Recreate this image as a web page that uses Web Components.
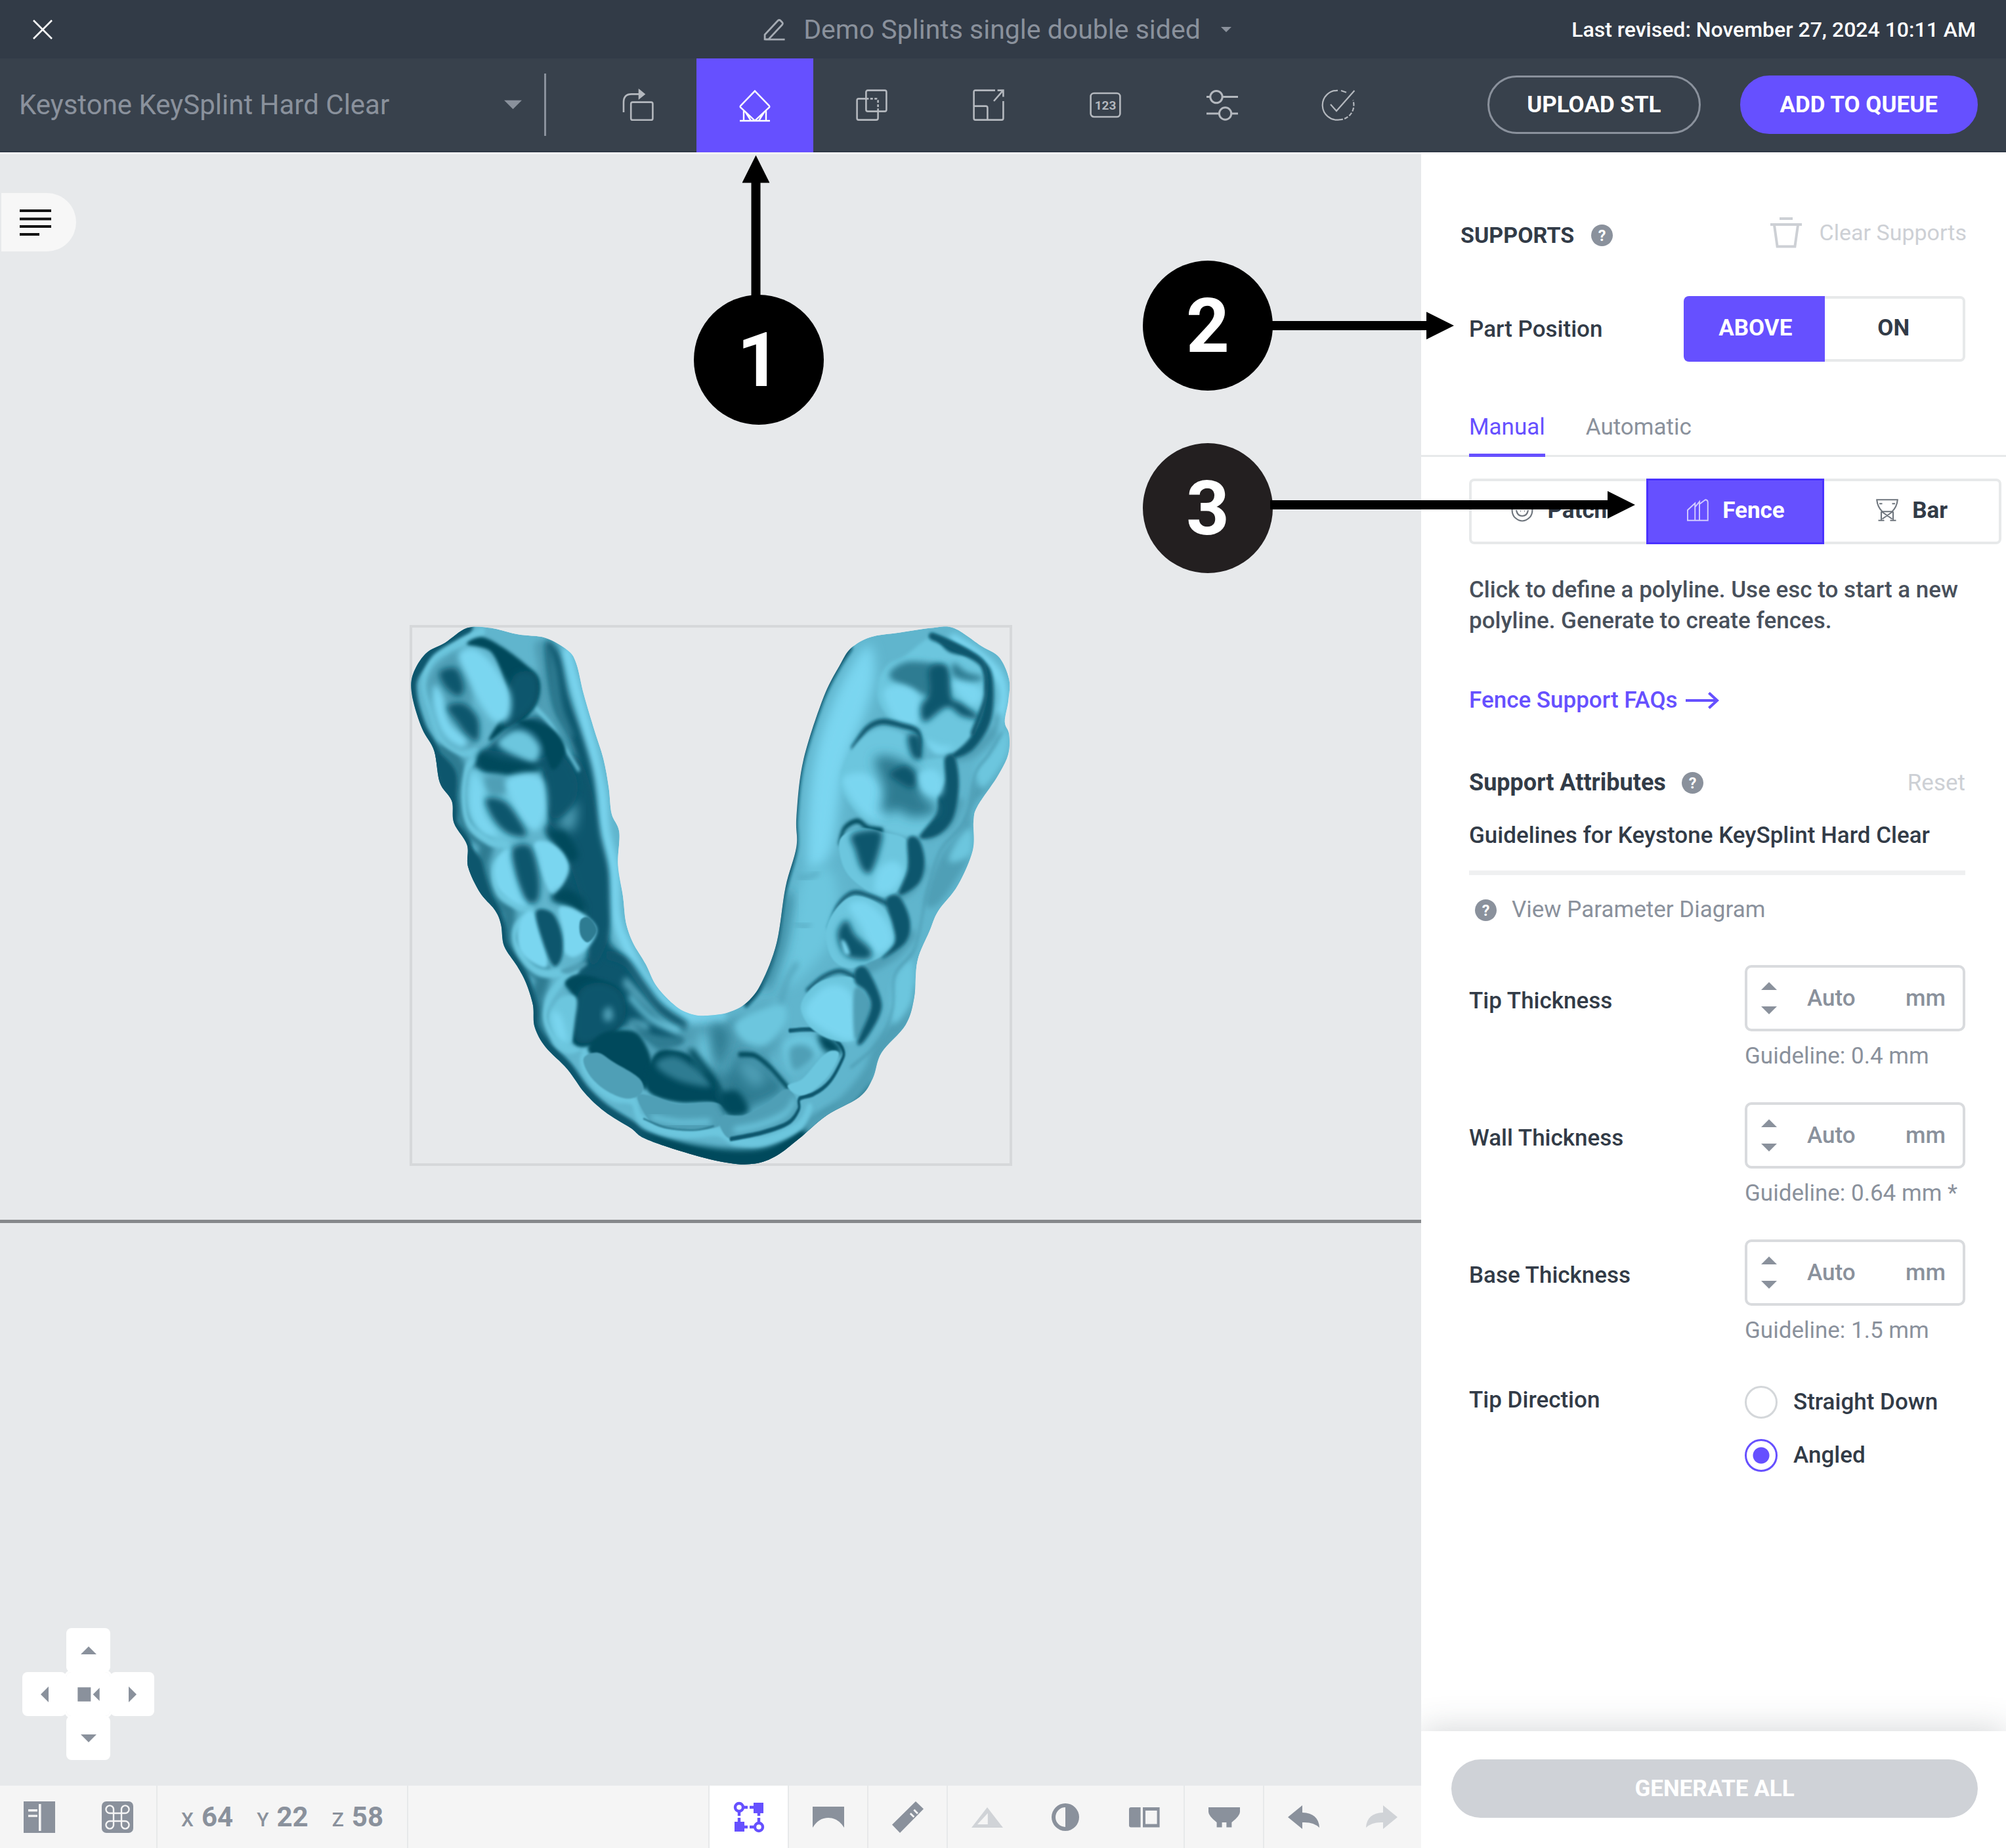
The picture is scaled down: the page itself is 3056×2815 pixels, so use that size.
<!DOCTYPE html>
<html lang="en">
<head>
<meta charset="UTF-8">
<meta name="viewport" content="width=device-width, initial-scale=1">
<title>Demo Splints single double sided</title>
<style>
  :root {
    --accent: #6650ff;
    --ink: #323b47;
    --grey: #8a919c;
    --faint: #cdd0d5;
    --line: #e7e9ea;
    --text: 35px;
  }
  * { box-sizing: border-box; }
  body {
    margin: 0;
    font-family: Roboto, "Liberation Sans", sans-serif;
    font-size: var(--text);
    color: var(--ink);
  }
</style>
</head>
<body>
<print-prep></print-prep>

<script>
const RESET = `
  :host, *, *::before, *::after { box-sizing: border-box; }
  button, input, select { font: inherit; color: inherit; margin: 0; padding: 0; border: 0; background: none; border-radius: 0; }
  button { display: flex; align-items: center; justify-content: center; cursor: pointer; }
`;

/* Icon artwork, all on a 24 unit grid. "line" icons are stroked, the rest filled. */
const ICONS = {
  close: { line: 1.3, art: `<path d="M5 5l14 14M19 5L5 19"/>` },
  pencil: { line: 2, art: `<path d="M1.500 22.500v-5L15.500 2.500q1.500-1.500 3 0l1.500 1.500q1.500 1.500 0 3L5.500 22.500zM2 22.700h21"/>` },
  caret: { art: `<path d="M0 6h24L12 18z"/>` },
  caretUp: { art: `<path d="M0 18h24L12 6z"/>` },
  caretLeft: { art: `<path d="M18 0v24L6 12z"/>` },
  caretRight: { art: `<path d="M6 0v24L18 12z"/>` },
  orient: { line: 1.3, art: `<path d="M1 17.500V10Q1 3.700 7 3.700h8.500"/><path d="M13 .8l3.600 2.900L13 6.600z" fill="currentColor"/><rect x="6.600" y="9.800" width="16.600" height="13.600" rx="1.300"/>` },
  supports: { line: 1.2, art: `<path d="M12 .8l11 11.400q.4.500 0 1L12 23.400 1 13.200q-.4-.5 0-1zM.5 23.500h23M3.500 16v7.500M20.500 16v7.500M5 17l4 6.400M19 17l-4 6.400"/>` },
  duplicate: { line: 1.3, art: `<rect x="7.700" y=".8" width="15.500" height="16" rx="1.300"/><path d="M7.700 7.200H2q-1.200 0-1.200 1.200V22q0 1.300 1.200 1.300h13.400q1.400 0 1.400-1.300v-5.200"/><path d="M7.700 7.200h7.800q1.300 0 1.300 1.300v8.300" stroke-dasharray="2 1.200"/>` },
  scale: { line: 1.3, art: `<path d="M17 .8H2Q.8.8.8 2v20q0 1.300 1.200 1.300h20q1.200 0 1.200-1.300V9M.8 12.800h9q1.400 0 1.400 1.300v9.200M16 9l6.500-7.500M18.800.8h4.400v5"/>` },
  numbers: { line: 1.3, art: `<rect x=".8" y="3" width="22.400" height="18" rx="2.500"/><text x="12" y="15.400" text-anchor="middle" font-size="9.500" font-weight="700" fill="currentColor" stroke="none">123</text>` },
  sliders: { line: 1.5, art: `<path d="M0 5.800h2.800M12 5.800h12M0 18.500h9.500M19 18.500h5"/><circle cx="7.500" cy="5.800" r="4.600"/><circle cx="14.300" cy="18.500" r="4.600"/>` },
  check: { line: 1.1, art: `<path d="M11 .9A11.200 11.200 0 1 0 12 23.200"/><path d="M12 23.200A11.200 11.200 0 0 0 22.600 8.300" stroke-dasharray="3 1.200"/><path d="M13.500 1l4 1.400M5.500 11.500l4.500 5L23.700 1"/>` },
  menu: { line: 2, art: `<path d="M0 3h24M0 9.200h24M0 15h24M0 21h15"/>` },
  help: { art: `<circle cx="12" cy="12" r="12"/><text x="12" y="18" text-anchor="middle" font-size="17" font-weight="700" fill="#fff">?</text>` },
  trash: { line: 2, art: `<path d="M0 6h24M3 6.500l2.300 16.300h13.400L21 6.500M7 1.500h10"/>` },
  patch: { line: 1.4, art: `<path d="M3.500 6C1 9 1 16 4.500 19.500q7.500 7 15 0C23 16 23 9 20.500 6q-8.500-7-17 0zM6 12q1 6 6 6t6-6" /><path d="M8 8h.6M12 9h.6M16 8h.6M10 13h.6M14 13h.6"/>` },
  fence: { line: 1.3, art: `<path d="M2 22.500V12L9.500 5v17.500zM9.500 22.500V9L14 3.500v19zM14 22.500V6l6-4.500q2.500 0 2.500 3v18z"/>` },
  bar: { line: 1.4, art: `<path d="M1.500 1.500h21q-.5 7-5.500 12H7Q2 8.500 1.500 1.500zM4 5.500h3M17 5.500h3M6 13.500v9M18 13.500v9M3 22.500h6M15 22.500h6M7 14l10 7M17 14L7 21"/>` },
  arrow: { line: 2, art: `<path d="M0 12h23M17 6.500l6 5.500-6 5.500"/>` },
  camera: { art: `<path d="M2 5.500h12v13H2zM22 6v12l-6-6z"/>` },
  sidebar: { art: `<path fill-rule="evenodd" d="M0 0h24v24H0zM11.500 2v20.500h1.800V2zM3.500 6v1.700h7V6zM3.500 10.200v1.700h7v-1.700z"/>` },
  command: { art: `<rect width="24" height="24" rx="3.500"/><path fill="none" stroke="#f5f5f5" stroke-width="1.200" d="M9 9V5.800A2.900 2.900 0 1 0 6.200 9h11.600A2.900 2.900 0 1 0 15 5.800v12.400A2.900 2.900 0 1 0 17.800 15H6.200A2.900 2.900 0 1 0 9 18.200z"/>` },
  bounds: { line: 2.2, art: `<circle cx="4.500" cy="4.500" r="3"/><circle cx="19.500" cy="19.500" r="3"/><path fill="currentColor" stroke="none" d="M15.500 1H23v8h-7.500zM1 15.500h7.500V23H1z"/><path d="M4.500 8v8M19.500 8v8M8 4.500h8M8 19.500h8" stroke-dasharray="3 1.500"/>` },
  arch: { art: `<path d="M0 4h24v16Q19.500 12.500 12 12.500T0 20z"/>` },
  ruler: { art: `<path fill-rule="evenodd" d="M18 0l6 5.800L6 24 0 17.800zM13.400 9.600l2.800 2.800 1-1-2.800-2.800zM16.200 6.900l2.800 2.800 1-1-2.800-2.800z"/>` },
  mirror: { art: `<path fill-rule="evenodd" d="M12 4.500L24 20H0zM12.400 9L4.500 17.500h7.900z"/>` },
  contrast: { art: `<path fill-rule="evenodd" d="M12 1.500a10.500 10.500 0 1 1 0 21a10.500 10.500 0 1 1 0-21zM12 4.500a7.500 7.500 0 0 0 0 15z"/>` },
  split: { art: `<path fill-rule="evenodd" d="M2 4.500h7.300v15.300H2q-1.500 0-1.500-1.500V6Q.5 4.500 2 4.500zM11 4.500h12.800v15.300H11zM13 7v10.300h8.800V7z"/>` },
  section: { art: `<path d="M0 4.500h24V8q0 3-6.300 8v3.800h-4V16h-3.400v3.800h-4V16Q0 11 0 8z"/>` },
  undo: { art: `<path d="M11 3v5.500Q23.500 9 24 20q-4.500-4.500-13-4v5L0 12z"/>` },
  redo: { art: `<path d="M13 3v5.500Q.5 9 0 20q4.500-4.500 13-4v5L24 12z"/>` }
};

/**
 * @module AppIcon
 * @description Inline icon. Size comes from --size, colour from currentColor.
 */
class AppIcon extends HTMLElement {
  connectedCallback() {
    const icon = ICONS[this.getAttribute("name")];
    const paint = icon.line
      ? `fill="none" stroke="currentColor" stroke-width="${icon.line}"`
      : `fill="currentColor"`;
    this.attachShadow({ mode: "open" }).innerHTML = `
      <style>
        :host { display: block; flex: none; width: var(--size, 48px); height: var(--size, 48px); }
        svg { display: block; width: 100%; height: 100%; overflow: visible; }
      </style>
      <svg viewBox="0 0 24 24" ${paint} aria-hidden="true">${icon.art}</svg>
    `;
  }
}
customElements.define("app-icon", AppIcon);

/**
 * @module TitleBar
 * @description Dark strip with close button, project name and revision date.
 */
class TitleBar extends HTMLElement {
  connectedCallback() {
    this.attachShadow({ mode: "open" }).innerHTML = `
      <style>
        ${RESET}
        :host { display: grid; grid-template-columns: 1fr auto 1fr; align-items: center; height: 89px; padding: 0 46px 0 41px; background: var(--ink); }
        .close { justify-self: start; color: #fff; }
        .name { gap: 15px; color: var(--grey); font-size: 41px; }
        .name app-icon { --size: 16px; margin: 0 12px 0 16px; }
        .name .edit { --size: 34px; margin: 0 12px 0 0; color: #a5abb3; }
        .revised { justify-self: end; color: #fff; font-size: 32px; font-weight: 500; }
      </style>
      <button class="close" aria-label="Close"><app-icon name="close"></app-icon></button>
      <button class="name"><app-icon class="edit" name="pencil"></app-icon><slot></slot><app-icon name="caret"></app-icon></button>
      <div class="revised"><slot name="revised"></slot></div>
    `;
  }
}
customElements.define("title-bar", TitleBar);

/**
 * @module ToolBar
 * @description Material picker, step tools and the two main actions.
 */
class ToolBar extends HTMLElement {
  connectedCallback() {
    const tools = ["orient", "supports", "duplicate", "scale", "numbers", "sliders", "check"];
    this.attachShadow({ mode: "open" }).innerHTML = `
      <style>
        ${RESET}
        :host { display: flex; align-items: center; height: 143px; padding-right: 43px; background: #38414c; border-bottom: 2px solid #2f3845; }
        .material { display: flex; align-items: center; width: 832px; height: 95px; padding: 0 34px 0 29px; border-right: 3px solid var(--grey); color: var(--grey); }
        select { flex: 1; appearance: none; outline: none; font-size: 42px; }
        .material app-icon { --size: 27px; }
        nav { display: flex; align-self: stretch; margin-left: 51px; color: #b4b8be; }
        nav button { width: 178px; }
        nav .on { background: var(--accent); color: #fff; margin-bottom: -2px; }
        .actions { display: flex; gap: 60px; margin-left: auto; }
        .actions button { height: 89px; padding: 0 57px; border: 3px solid var(--grey); border-radius: 45px; color: #fff; font-weight: 700; white-space: nowrap; }
        .actions .main { padding: 0 58px; background: var(--accent); border-color: var(--accent); }
      </style>
      <div class="material">
        <select aria-label="Material"><option>Keystone KeySplint Hard Clear</option></select>
        <app-icon name="caret"></app-icon>
      </div>
      <nav>
        ${tools.map((name) => `<button class="${name === "supports" ? "on" : ""}" aria-label="${name}"><app-icon name="${name}"></app-icon></button>`).join("")}
      </nav>
      <div class="actions">
        <button>UPLOAD STL</button>
        <button class="main">ADD TO QUEUE</button>
      </div>
    `;
  }
}
customElements.define("tool-bar", ToolBar);

/**
 * Smooth path through a list of points.
 * @param {string} list - "x,y x,y ..." pairs.
 * @param {boolean} closed - Join the last point to the first.
 * @returns {string} Path data.
 */
function smooth(list, closed) {
  const p = list.trim().split(/\s+/).map((s) => s.split(",").map(Number));
  const n = p.length;
  const at = (i) => (closed ? p[(i + n) % n] : p[Math.max(0, Math.min(n - 1, i))]);
  let d = `M${p[0]}`;
  for (let i = 0; i < (closed ? n : n - 1); i++) {
    const [a, b, c, e] = [at(i - 1), at(i), at(i + 1), at(i + 2)];
    const c1 = [b[0] + (c[0] - a[0]) / 6, b[1] + (c[1] - a[1]) / 6].map(Math.round);
    const c2 = [c[0] - (e[0] - b[0]) / 6, c[1] - (e[1] - b[1]) / 6].map(Math.round);
    d += `C${c1} ${c2} ${c}`;
  }
  return d + (closed ? "Z" : "");
}

const OUTLINE = `80,175 140,115 230,85 330,45 440,45 560,62 690,72 790,105 830,140 865,225 915,325 955,400 980,480
  993,550 1028,600 1022,690 1045,775 1058,845 1090,900 1150,960 1200,1020 1290,1075 1370,1097 1440,1099 1530,1090
  1610,1065 1680,1010 1750,900 1790,750 1840,640 1840,560 1870,410 1960,240 2040,145 2090,100 2180,70 2310,58
  2460,45 2560,45 2690,95 2770,125 2815,185 2812,240 2795,300 2815,335 2810,390 2760,450 2670,530 2652,570
  2648,650 2580,745 2490,815 2450,870 2395,950 2380,1050 2340,1125 2230,1200 2190,1270 2130,1320 1980,1370
  1850,1435 1750,1480 1650,1502 1530,1500 1350,1475 1150,1435 1080,1405 960,1360 870,1310 790,1245 690,1185
  640,1130 632,1070 600,1010 560,965 500,910 485,850 455,810 390,765 335,695 330,635 270,575 260,515 205,465
  180,380 125,320 80,235`;

const LIGHT = "#7ad6f0", SOFT = "#6cc6de", MID = "#4f9fb6", DIM = "#2f7b92", DARK = "#0f566d", DEEP = "#034a5c";

/* Shading of the scan, painted in order: [colour, softness, points, stroke width?] */
const SHADES = [
  // outer wall of the left arm and the front
  [DIM, 2, "190,390 250,395 300,440 290,500 330,580 420,625 400,690 440,770 520,810 520,880 590,950 680,985 650,1060 700,1150", 60],
  [DARK, 1, "330,40 200,90 90,160 75,230 120,325 175,385 200,470 255,520 265,585 325,640 330,700 385,770 450,815 480,860 495,915 560,975 600,1020 628,1080 635,1135 690,1190 790,1250 870,1315 960,1365 1080,1410 1150,1440 1350,1482 1530,1508 1650,1510 1760,1485 1860,1440", 54],
  [DARK, 1, "185,385 250,410 285,450 268,520 210,470"], [DARK, 1, "335,640 390,670 415,720 455,808 380,770 330,700"],
  [DEEP, 2, "1080,1400 1150,1420 1350,1448 1550,1462 1700,1456 1850,1415 1980,1360 2100,1325 2180,1270 2110,1350 1850,1450 1700,1520 1400,1510"],
  [MID, 2, "1900,1400 2050,1345 2170,1260 2220,1190 2330,1110 2370,1040", 50],
  // inner wall and floor of the left arm
  [MID, 2, "640,90 700,90 740,200 800,330 840,430 700,310 640,290 660,180"],
  [DARK, 2, "690,85 760,120 800,230 870,340 920,430 935,560 975,680 990,800 975,890 1100,970 1200,1060 1330,1130 1300,1180 1150,1160 1050,1130 900,1180 820,1170 830,1060 790,1010 860,960 930,870 860,800 720,780 800,690 690,600 720,560 700,500 700,420 390,430 390,395 560,300 700,300 840,425 790,330 730,250"],
  [DARK, 2, "680,420 840,400 930,560 980,720 980,880 900,960 860,800 760,620 700,560"],
  [DIM, 2, "700,95 740,150 770,260 820,340 780,320 720,240"],
  [LIGHT, 2, "790,115 820,190 880,320 925,420 950,500 965,600 1005,700 1015,830 1070,920 1160,1015 1260,1080 1380,1112 1500,1110", 40],
  [SOFT, 1, "640,260 720,310 780,370 840,430", 14],
  [MID, 3, "760,560 830,520 820,590 760,590"],
  // ridge that follows the crowns
  [SOFT, 1, "400,55 300,85 180,130 135,195 170,280 215,345 300,380 375,385 330,430 315,510 340,580 430,625 520,640 455,700 475,765 560,800 625,812 555,860 555,910 620,965 700,985 830,975", 24],
  [SOFT, 1, "790,985 710,1050 690,1110 740,1170 800,1190 885,1180 860,1225 910,1280 1000,1320 1090,1330 1120,1375 1200,1405 1330,1420 1480,1415 1560,1440 1700,1440 1850,1400 1900,1350", 26],
  // first molar, left
  [DEEP, 1, "330,90 400,70 500,100 600,145 660,185 655,240 600,290 530,310 430,350 520,250 500,190 440,110"],
  [DARK, 2, "540,180 640,170 650,240 580,290 500,310"],
  [MID, 2, "150,190 220,130 330,110 360,200 340,300 380,350 300,375 220,340 170,260"],
  [LIGHT, 2, "290,120 350,100 420,125 480,170 530,230 520,290 460,300 400,260 340,190"],
  [LIGHT, 2, "180,200 220,230 250,300 330,350 300,370 220,335 175,260"],
  [DARK, 2, "205,165 280,155 315,205 290,230 230,205"],
  [DARK, 2, "240,260 310,250 380,290 380,350 330,335 285,300"],
  // second molar, left
  [DARK, 2, "400,380 460,380 660,400 740,380 830,450 820,520 720,560 680,430 560,440 400,430"],
  [DEEP, 1, "560,300 640,300 740,330 780,380 720,430 660,340 600,315"],
  [SOFT, 2, "470,360 540,325 610,330 665,370 640,410 560,395"],
  [DEEP, 2, "385,385 480,400 680,425 560,445 400,430"],
  [SOFT, 2, "350,430 420,450 520,480 600,560 560,620 450,620 360,580 335,510"],
  [MID, 2, "410,450 500,450 520,490 440,500"],
  [LIGHT, 2, "510,460 600,440 680,460 695,540 650,595 580,570 530,510"],
  [LIGHT, 2, "355,440 400,480 410,550 470,605 400,600 345,540"],
  [DARK, 2, "415,510 500,515 575,570 600,610 520,605 450,565"],
  // premolars, left
  [DEEP, 2, "700,600 780,600 840,660 800,680 720,620"],
  [LIGHT, 1, "480,665 540,650 560,720 610,790 560,795 480,760 455,710"],
  [LIGHT, 1, "635,640 690,625 760,650 795,690 780,730 730,770 690,740"],
  [DARK, 2, "540,645 620,640 660,720 655,785 600,785 550,705"],
  [DEEP, 2, "720,780 790,755 870,790 870,830 790,800"],
  [LIGHT, 1, "570,850 620,815 660,850 700,960 640,960 570,920"],
  [LIGHT, 1, "750,810 800,805 880,830 925,865 890,910 820,940 770,920 770,870"],
  [DIM, 0, "850,840 890,833 925,868 885,900 850,880"],
  [DARK, 1, "645,820 720,820 765,880 765,940 730,965 690,920"],
  [MID, 1, "760,975 850,955 880,960 800,985"],
  // canine and incisors, left
  [DEEP, 1, "780,1010 850,990 940,1000 1030,1030 1055,1100 950,1170 820,1175 830,1060"],
  [DARK, 2, "840,1040 940,1010 1040,1040 1050,1110 960,1160 830,1165"],
  [SOFT, 1, "710,1090 760,1050 830,1050 825,1110 800,1180 740,1160 705,1120"],
  [LIGHT, 2, "720,1090 760,1100 790,1170 740,1150"],
  [MID, 2, "955,1090 985,1075 1000,1105 965,1115"],
  [MID, 2, "1060,1010 1200,1090 1330,1150 1480,1150 1580,1120 1650,1140 1700,1250 1560,1300 1400,1210 1250,1190 1180,1210 1080,1130 1150,1130", 30],
  [DARK, 2, "980,935 1060,955 1140,1020 1220,1080 1330,1125", 26],
  [SOFT, 2, "1080,1050 1180,1110 1300,1140", 18],
  [DIM, 2, "1080,1110 1180,1150 1320,1160 1280,1185 1190,1190"],
  [DEEP, 1, "890,1180 960,1145 1080,1140 1140,1170 1180,1240 1150,1300 1120,1280 1000,1240 900,1205"],
  [MID, 0, "865,1215 930,1200 1000,1225 1120,1270 1130,1310 1060,1325 960,1300 890,1260"],
  [DEEP, 1, "1150,1260 1200,1200 1290,1195 1380,1220 1500,1300 1540,1360 1450,1335 1300,1335 1170,1310"],
  [DIM, 2, "1200,1225 1280,1210 1370,1240 1450,1290 1320,1280 1220,1250"],
  [MID, 0, "1110,1320 1180,1318 1300,1340 1480,1338 1510,1380 1460,1405 1300,1408 1180,1392"],
  [SOFT, 2, "1180,1375 1300,1390 1440,1388", 14],
  [DIM, 0, "1140,1380 1250,1405 1380,1410 1460,1400", 5],
  // floor of the arch
  [MID, 3, "1330,1130 1480,1120 1600,1100 1700,1070 1760,1100 1740,1200 1640,1200 1500,1230 1400,1210"],
  [SOFT, 3, "1400,1150 1440,1160 1450,1250 1390,1220"],
  [DIM, 3, "1450,1130 1530,1150 1500,1240 1560,1290 1500,1280"],
  [SOFT, 2, "1560,1120 1680,1080 1780,1070 1790,1120 1700,1180 1600,1170"],
  [DEEP, 2, "1360,1200 1470,1280 1530,1340", 26],
  [DIM, 3, "1550,1220 1620,1205 1740,1260 1790,1300 1680,1340 1560,1360 1500,1300"],
  [MID, 3, "1570,1230 1640,1225 1700,1270 1640,1290"],
  [DEEP, 1, "1580,1205 1650,1208 1720,1240 1800,1295", 14],
  [DEEP, 2, "1490,1315 1570,1305 1620,1360 1530,1372"],
  [MID, 0, "1500,1372 1600,1370 1700,1340 1790,1300 1840,1325 1840,1365 1780,1395 1660,1420 1540,1435 1490,1400"],
  [SOFT, 2, "1560,1410 1680,1395 1790,1365 1830,1330", 16],
  [DARK, 0, "1540,1435 1680,1418 1800,1392 1850,1355 1855,1325 1920,1312 1990,1280 2045,1225 2055,1195 2010,1160 1930,1138 1810,1140", 12],
  [SOFT, 2, "1780,1180 1850,1150 1940,1160 1970,1190 1880,1240 1810,1250"],
  [MID, 2, "1810,1190 1880,1180 1920,1210 1830,1250"],
  [DEEP, 2, "1940,1150 2010,1165 2050,1200 1970,1195"],
  [SOFT, 0, "1800,1290 1870,1270 1950,1215 2000,1195 2035,1205 1990,1260 1910,1305 1850,1315"],
  // right arm: broad light wall with a dark inner edge
  [LIGHT, 3, "2170,90 2060,180 1960,320 1910,450 1890,600 1900,700 2000,650 2060,430 2160,270 2200,170"],
  [SOFT, 3, "1870,720 1990,700 2030,780 1990,900 1850,1000 1780,1010 1820,880"],
  [MID, 2, "1850,725 1900,722 1940,712", 8], [MID, 2, "1840,850 1880,858 1900,850", 8], [MID, 2, "1770,1060 1800,1000 1840,960", 16],
  [DARK, 1, "1610,1068 1680,1015 1748,905 1785,760 1835,645 1836,560 1866,410 1956,240 2036,145 2086,100", 20],
  [DIM, 3, "1700,1010 1765,900 1800,780", 34],
  // buccal side of the right arm
  [MID, 2, "2800,400 2720,480 2640,540 2640,650 2560,740 2480,800 2430,790 2490,680 2600,580 2660,460 2780,350"],
  [SOFT, 2, "2660,430 2740,370 2800,320 2810,390 2700,480"],
  [SOFT, 2, "2580,620 2640,590 2640,660 2540,680"],
  [SOFT, 2, "2290,1000 2370,950 2370,1060 2280,1120"],
  [MID, 1, "2780,330 2720,390 2660,440 2640,520 2600,580 2500,650 2440,760 2400,880 2370,930 2290,990 2280,1080 2220,1170 2090,1240", 9],
  [LIGHT, 2, "2560,80 2690,130 2770,180 2790,240 2760,310", 40],
  [MID, 2, "2540,395 2640,385 2740,330 2760,290", 30],
  [MID, 2, "2440,610 2540,580 2590,520", 30], [MID, 2, "2300,780 2380,750 2430,700", 24], [MID, 2, "2170,970 2290,930 2370,880", 34],
  // molars, right
  [DARK, 1, "2450,65 2560,85 2690,130 2740,180 2732,295 2650,375 2550,395 2660,310 2700,240 2690,170 2600,125 2540,150"],
  [SOFT, 1, "2215,190 2260,145 2340,120 2460,70 2540,110 2690,140 2700,240 2660,320 2580,375 2480,385 2420,345 2300,310 2220,250"],
  [DARK, 1, "2460,68 2530,85 2620,112 2690,142 2710,190 2700,250 2650,330", 20],
  [DIM, 2, "2270,180 2330,140 2450,140 2530,160 2540,240 2440,230"],
  [LIGHT, 2, "2240,220 2320,200 2400,230 2390,310 2300,300"],
  [DARK, 2, "2450,155 2530,150 2545,230 2600,250 2680,290 2600,285 2530,260 2430,300 2410,260 2450,220"],
  [LIGHT, 2, "2560,190 2630,190 2690,220 2660,255 2590,230"],
  [DIM, 2, "2560,140 2620,165 2700,180 2640,190 2560,175"],
  [LIGHT, 2, "2430,350 2500,365 2560,370 2490,388"],
  [DARK, 1, "2100,370 2160,320 2230,300 2320,310 2400,330 2400,390", 16],
  [SOFT, 1, "2040,450 2100,370 2220,320 2350,340 2400,400 2510,400 2540,440 2510,520 2470,580 2380,610 2280,600 2160,570 2070,510"],
  [DARK, 1, "2520,400 2565,395 2585,470 2560,560 2490,608 2405,614 2480,550 2490,500 2520,460"],
  [DARK, 2, "2350,340 2405,340 2410,400 2370,395"],
  [LIGHT, 2, "2050,460 2150,440 2230,480 2250,560 2150,550"],
  [DIM, 3, "2200,400 2300,400 2400,440 2420,500 2490,540 2380,560 2300,540 2230,550 2240,480"],
  [DARK, 2, "2270,440 2340,420 2390,450 2370,480 2300,460"],
  [LIGHT, 2, "2400,440 2470,430 2510,460 2500,500 2420,490"],
  // premolars, right
  [DEEP, 1, "2040,630 2060,590 2120,570 2170,590 2230,595", 14],
  [SOFT, 0, "2035,630 2080,600 2160,590 2230,600 2340,620 2350,690 2300,760 2220,775 2130,745 2060,700"],
  [DARK, 2, "2090,610 2160,595 2230,600 2220,650 2180,710 2140,700 2110,650"],
  [LIGHT, 2, "2220,700 2290,680 2330,710 2280,760 2200,760"],
  [DARK, 1, "2350,620 2400,620 2428,680 2400,740 2310,770 2350,700"],
  [DARK, 1, "1990,860 2030,800 2100,765 2180,775 2260,795", 12],
  [SOFT, 0, "1975,870 2020,810 2100,775 2200,790 2270,830 2300,890 2250,930 2150,960 2070,970 2000,940"],
  [LIGHT, 2, "2080,800 2160,790 2250,840 2280,900 2200,930 2140,860"],
  [DARK, 1, "2250,785 2310,775 2360,840 2340,900 2230,945 2290,900 2280,850"],
  [DARK, 2, "2030,870 2070,840 2110,880 2180,920 2170,945 2080,940 2040,910"],
  [LIGHT, 1, "2045,895 2065,900 2085,930 2060,930"],
  // canine, right
  [DARK, 1, "1890,1030 1960,995 2040,978 2110,995", 12],
  [SOFT, 0, "1860,1080 1900,1030 1980,1000 2110,1000 2180,1070 2150,1150 2040,1170 1920,1140"],
  [LIGHT, 2, "1880,1090 1980,1020 2090,1040 2110,1160 2000,1150"],
  [MID, 1, "2105,1030 2160,1040 2180,1090 2110,1165"],
  [DARK, 1, "2110,975 2160,970 2225,1050 2220,1100 2150,1170 2120,1170 2180,1080 2160,1035 2110,1010"]
];

/**
 * @module ScanModel
 * @description Top view of the splint scan inside its bounding box.
 */
class ScanModel extends HTMLElement {
  connectedCallback() {
    const shade = ([colour, soft, points, width]) =>
      width
        ? `<path d="${smooth(points, false)}" fill="none" stroke="${colour}" stroke-width="${width}" stroke-linecap="round" filter="url(#s${soft})"/>`
        : `<path d="${smooth(points, true)}" fill="${colour}" filter="url(#s${soft})"/>`;
    const outline = smooth(OUTLINE, true);
    this.attachShadow({ mode: "open" }).innerHTML = `
      <style>
        :host { display: block; box-sizing: border-box; width: 918px; height: 824px; border: 4px solid #d6d8da; }
        svg { display: block; width: 100%; height: 100%; overflow: visible; }
      </style>
      <svg viewBox="79 44 2738 1457" preserveAspectRatio="none" role="img" aria-label="Splint model">
        <defs>
          <clipPath id="arch"><path d="${outline}"/></clipPath>
          <filter id="s0" x="-20%" y="-20%" width="140%" height="140%"><feGaussianBlur stdDeviation="3 2"/></filter>
          <filter id="s1" x="-30%" y="-30%" width="160%" height="160%"><feGaussianBlur stdDeviation="8 5"/></filter>
          <filter id="s2" x="-40%" y="-40%" width="180%" height="180%"><feGaussianBlur stdDeviation="15 9"/></filter>
          <filter id="s3" x="-50%" y="-50%" width="200%" height="200%"><feGaussianBlur stdDeviation="26 15"/></filter>
        </defs>
        <g clip-path="url(#arch)">
          <path d="${outline}" fill="#60b5cd"/>
          ${SHADES.map(shade).join("")}
        </g>
      </svg>
    `;
  }
}
customElements.define("scan-model", ScanModel);

/**
 * @module ViewPad
 * @description Cross shaped camera control.
 */
class ViewPad extends HTMLElement {
  connectedCallback() {
    this.attachShadow({ mode: "open" }).innerHTML = `
      <style>
        ${RESET}
        :host { display: grid; grid-template: repeat(3, 67px) / repeat(3, 67px); color: var(--grey); }
        button { background: #fff; border-radius: 8px; }
        app-icon { --size: 24px; }
        .up { grid-area: 1 / 2; } .left { grid-area: 2 / 1; } .right { grid-area: 2 / 3; } .down { grid-area: 3 / 2; }
        .home { grid-area: 2 / 2; outline: 3px solid #fff; }
        .home app-icon { --size: 40px; }
      </style>
      <button class="up" aria-label="Top view"><app-icon name="caretUp"></app-icon></button>
      <button class="left" aria-label="Left view"><app-icon name="caretLeft"></app-icon></button>
      <button class="home" aria-label="Reset camera"><app-icon name="camera"></app-icon></button>
      <button class="right" aria-label="Right view"><app-icon name="caretRight"></app-icon></button>
      <button class="down" aria-label="Bottom view"><app-icon name="caret"></app-icon></button>
    `;
  }
}
customElements.define("view-pad", ViewPad);

/**
 * @module StatusBar
 * @description Bottom strip: panels, model size and view tools.
 */
class StatusBar extends HTMLElement {
  connectedCallback() {
    const tools = [
      ["bounds", "on ruled"], ["arch", "ruled"], ["ruler", "ruled"], ["mirror", "ruled off"], ["contrast", ""],
      ["split", ""], ["section", "ruled"], ["undo", "ruled"], ["redo", "off"]
    ];
    const size = { X: 64, Y: 22, Z: 58 };
    this.attachShadow({ mode: "open" }).innerHTML = `
      <style>
        ${RESET}
        :host { display: flex; height: 95px; background: #f5f5f5; color: var(--grey); }
        button { width: 119px; }
        .panels { display: flex; }
        .size { display: flex; align-items: center; gap: 36px; padding: 4px 36px; margin: 0; border: solid var(--line); border-width: 0 2px; }
        .size div { display: flex; align-items: baseline; gap: 12px; }
        dt { font-size: 30px; font-weight: 500; }
        dd { margin: 0; font-size: 42px; font-weight: 700; }
        .view { display: flex; margin-left: auto; }
        .view button { width: 120px; }
        .view .ruled { width: 121px; border-left: 2px solid var(--line); }
        .on { background: #fff; color: var(--accent); }
        .off { color: #d0d3d7; }
      </style>
      <div class="panels">
        <button aria-label="Sidebar"><app-icon name="sidebar"></app-icon></button>
        <button aria-label="Shortcuts"><app-icon name="command"></app-icon></button>
      </div>
      <dl class="size">
        ${Object.entries(size).map(([axis, mm]) => `<div><dt>${axis}</dt><dd>${mm}</dd></div>`).join("")}
      </dl>
      <div class="view">
        ${tools.map(([name, cls]) => `<button class="${cls}" aria-label="${name}"><app-icon name="${name}"></app-icon></button>`).join("")}
      </div>
    `;
  }
}
customElements.define("status-bar", StatusBar);

/**
 * @module BuildStage
 * @description Canvas with the model, its floating controls and the status bar.
 */
class BuildStage extends HTMLElement {
  connectedCallback() {
    this.attachShadow({ mode: "open" }).innerHTML = `
      <style>
        ${RESET}
        :host { display: flex; flex-direction: column; min-width: 0; background: #e7e9eb; }
        .canvas { position: relative; flex: 1; overflow: hidden; border-top: 3px solid #f3f4f5; }
        .menu { position: absolute; left: 2px; top: 59px; width: 114px; height: 89px; padding-right: 10px; background: #f7f7f7; border-radius: 0 45px 45px 0; color: #111; }
        scan-model { position: absolute; left: 624px; top: 717px; }
        .plate { position: absolute; left: 0; right: 0; top: 1623px; height: 5px; margin: 0; border: 0; background: #86888b; }
        view-pad { position: absolute; left: 34px; bottom: 39px; }
      </style>
      <div class="canvas">
        <button class="menu" aria-label="Parts list"><app-icon name="menu"></app-icon></button>
        <scan-model></scan-model>
        <hr class="plate">
        <view-pad></view-pad>
      </div>
      <status-bar></status-bar>
    `;
  }
}
customElements.define("build-stage", BuildStage);

/**
 * @module ThicknessField
 * @description Labelled stepper with unit and guideline text.
 */
class ThicknessField extends HTMLElement {
  connectedCallback() {
    this.attachShadow({ mode: "open" }).innerHTML = `
      <style>
        ${RESET}
        :host { display: grid; grid-template-columns: 1fr 336px; row-gap: 14px; }
        label { display: flex; align-items: center; padding-top: 8px; font-weight: 500; }
        .box { display: flex; align-items: center; height: 101px; padding: 0 26px 0 21px; border: 4px solid #d9dbde; border-radius: 10px; color: var(--grey); font-weight: 500; }
        .steps { display: grid; gap: 13px; }
        .steps app-icon { --size: 24px; }
        input { flex: 1; min-width: 0; margin: 0 0 0 46px; outline: none; }
        .guide { grid-column: 2; margin: 0; line-height: 48px; color: var(--grey); white-space: nowrap; }
      </style>
      <label for="value">${this.getAttribute("label")}</label>
      <div class="box">
        <div class="steps">
          <button aria-label="Increase"><app-icon name="caretUp"></app-icon></button>
          <button aria-label="Decrease"><app-icon name="caret"></app-icon></button>
        </div>
        <input id="value" type="text" value="Auto">
        <span>mm</span>
      </div>
      <p class="guide"><slot></slot></p>
    `;
  }
}
customElements.define("thickness-field", ThicknessField);

/**
 * @module SupportsPanel
 * @description Right hand panel with the support settings.
 */
class SupportsPanel extends HTMLElement {
  connectedCallback() {
    this.attachShadow({ mode: "open" }).innerHTML = `
      <style>
        ${RESET}
        :host { display: flex; flex-direction: column; background: #fff; overflow: hidden; }
        h2, h3, p, fieldset { margin: 0; padding: 0; border: 0; font-size: inherit; line-height: 48px; }
        header { display: flex; align-items: center; height: 56px; margin: 98px 60px 65px; }
        h2 { font-size: 34px; }
        .help { --size: 33px; color: var(--grey); }
        header .help { margin-left: 26px; }
        .clear { align-self: flex-start; gap: 27px; margin-left: auto; color: var(--faint); font-size: 34px; }
        .row { display: flex; align-items: center; justify-content: space-between; margin: 0 62px 0 73px; }
        .medium { font-weight: 500; }
        .segments { display: flex; height: 100px; }
        .segments button { flex: 1; gap: 20px; padding-bottom: 4px; border: solid var(--line); border-width: 4px 0; font-weight: 700; }
        .segments button:first-child { border-left-width: 4px; border-radius: 8px 0 0 8px; }
        .segments button:last-child { border-right-width: 4px; border-radius: 0 8px 8px 0; }
        .segments .on { background: var(--accent); border-color: var(--accent); color: #fff; }
        .position { width: 429px; }
        .tabs { display: flex; gap: 62px; margin-top: 76px; padding-left: 73px; border-bottom: 3px solid var(--line); color: var(--grey); }
        .tabs button { margin-bottom: -3px; padding-bottom: 16px; border-bottom: 5px solid transparent; line-height: 48px; }
        .tabs .on { color: var(--accent); border-color: var(--accent); }
        .kinds { margin: 33px 7px 46px 73px; }
        .kinds app-icon { --size: 36px; opacity: .7; }
        .kinds .on { border-color: #4a32ff; border-width: 3px; }
        .note { margin: 0 62px 73px 73px; line-height: 47px; color: #48505b; font-weight: 500; }
        a { display: flex; align-items: center; gap: 12px; margin-left: 73px; line-height: 48px; color: var(--accent); font-weight: 500; text-decoration: none; }
        a app-icon { --size: 50px; }
        .heading { margin-top: 76px; }
        .heading h3 { margin-right: 24px; font-size: 36px; }
        .heading button { margin-left: auto; color: var(--faint); }
        .guides { margin: 33px 62px 0 73px; padding-bottom: 29px; border-bottom: 7px solid #eff0f1; font-weight: 500; }
        .diagram { align-self: flex-start; gap: 23px; margin: 29px 0 60px 82px; line-height: 48px; color: var(--grey); }
        .fields { display: grid; gap: 46px; margin: 0 62px 60px 73px; }
        .direction { display: grid; grid-template-columns: 1fr 336px; margin: 0 62px 0 73px; }
        .direction legend { float: left; padding: 0; line-height: 44px; font-weight: 500; }
        .choices { display: grid; gap: 31px; grid-column: 2; }
        .choices label { display: flex; align-items: center; gap: 24px; height: 50px; font-weight: 500; }
        input { appearance: none; width: 50px; height: 50px; border: 3px solid #d4d7da; border-radius: 50%; }
        input:checked { border-color: var(--accent); background: radial-gradient(var(--accent) 12px, transparent 13px); }
        footer { margin-top: auto; padding: 43px 43px 46px 46px; box-shadow: 0 -4px 48px rgba(50, 59, 71, .2); }
        footer button { width: 100%; height: 89px; border-radius: 45px; background: #cfd2d7; color: #fff; font-weight: 700; }
      </style>
      <header>
        <h2>SUPPORTS</h2>
        <app-icon class="help" name="help"></app-icon>
        <button class="clear"><app-icon name="trash"></app-icon>Clear Supports</button>
      </header>
      <div class="row">
        <span class="medium">Part Position</span>
        <div class="segments position"><button class="on">ABOVE</button><button>ON</button></div>
      </div>
      <div class="tabs"><button class="on">Manual</button><button>Automatic</button></div>
      <div class="segments kinds">
        <button><app-icon name="patch"></app-icon>Patch</button>
        <button class="on"><app-icon name="fence"></app-icon>Fence</button>
        <button><app-icon name="bar"></app-icon>Bar</button>
      </div>
      <p class="note">Click to define a polyline. Use esc to start a new polyline. Generate to create fences.</p>
      <a href="#faq">Fence Support FAQs<app-icon name="arrow"></app-icon></a>
      <div class="row heading">
        <h3>Support Attributes</h3>
        <app-icon class="help" name="help"></app-icon>
        <button>Reset</button>
      </div>
      <p class="guides">Guidelines for Keystone KeySplint Hard Clear</p>
      <button class="diagram"><app-icon class="help" name="help"></app-icon>View Parameter Diagram</button>
      <div class="fields">
        <thickness-field label="Tip Thickness">Guideline: 0.4 mm</thickness-field>
        <thickness-field label="Wall Thickness">Guideline: 0.64 mm *</thickness-field>
        <thickness-field label="Base Thickness">Guideline: 1.5 mm</thickness-field>
      </div>
      <fieldset class="direction">
        <legend>Tip Direction</legend>
        <div class="choices">
          <label><input type="radio" name="direction">Straight Down</label>
          <label><input type="radio" name="direction" checked>Angled</label>
        </div>
      </fieldset>
      <footer><button>GENERATE ALL</button></footer>
    `;
  }
}
customElements.define("supports-panel", SupportsPanel);

/**
 * @module StepCallout
 * @description Numbered disc with an arrow. "length" is the visible arrow,
 * "shift" moves its axis off the disc's centre.
 */
class StepCallout extends HTMLElement {
  connectedCallback() {
    const length = this.getAttribute("length");
    const shift = this.getAttribute("shift") || 0;
    this.attachShadow({ mode: "open" }).innerHTML = `
      <style>
        *, *::before { box-sizing: border-box; }
        :host { position: absolute; width: 198px; height: 198px; }
        .disc { display: grid; place-items: center; height: 100%; border-radius: 50%; background: var(--disc, #000); color: #fff; font: 700 115px/1 "Liberation Sans Narrow", Roboto, sans-serif; }
        svg { position: absolute; left: calc(100% - 4px); top: calc(50% - 21px + ${shift}px); width: ${length}px; height: 42px; }
        :host([up]) svg { left: calc(50% - ${length / 2}px + ${shift}px); top: auto; bottom: calc(100% + ${length / 2 - 25}px); transform: rotate(-90deg); }
      </style>
      <div class="disc"><slot></slot></div>
      <svg viewBox="0 0 ${length} 42" aria-hidden="true"><path d="M0 14H${length - 42}V0L${length} 21 ${length - 42} 42V28H0z"/></svg>
    `;
  }
}
customElements.define("step-callout", StepCallout);

/**
 * @module PrintPrep
 * @description Whole page: bars, stage, panel and the walkthrough callouts.
 */
class PrintPrep extends HTMLElement {
  connectedCallback() {
    this.attachShadow({ mode: "open" }).innerHTML = `
      <style>
        :host { position: relative; display: flex; flex-direction: column; min-height: 100vh; overflow: hidden; }
        main { flex: 1; display: grid; grid-template-columns: 1fr 891px; }
        .one { left: 1057px; top: 449px; }
        .two { right: 1117px; top: 397px; }
        .three { right: 1117px; top: 675px; --disc: #231f20; }
      </style>
      <title-bar>Demo Splints single double sided<span slot="revised">Last revised: November 27, 2024 10:11 AM</span></title-bar>
      <tool-bar></tool-bar>
      <main>
        <build-stage></build-stage>
        <supports-panel></supports-panel>
      </main>
      <step-callout class="one" up length="217" shift="-5">1</step-callout>
      <step-callout class="two" length="280">2</step-callout>
      <step-callout class="three" length="556" shift="-5">3</step-callout>
    `;
  }
}
customElements.define("print-prep", PrintPrep);
</script>
</body>
</html>
